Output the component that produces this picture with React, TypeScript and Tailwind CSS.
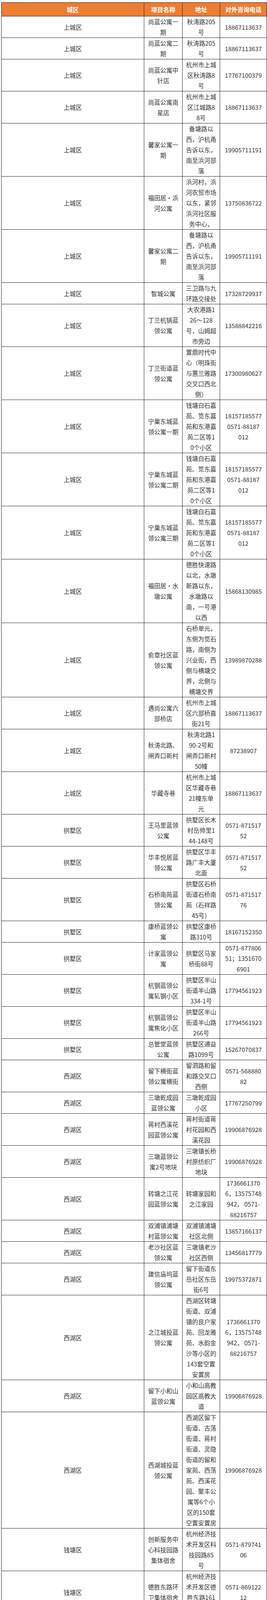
type Row = [string, string, string, string];

// 每个单元格里的换行按原图手动断开
const rows: Row[] = [
  ["上城区", "尚蓝公寓一\n期", "秋涛路205\n号", "18867113637"],
  ["上城区", "尚蓝公寓二\n期", "秋涛路205\n号", "18867113637"],
  ["上城区", "尚蓝公寓中\n针店", "杭州市上城\n区秋涛路8\n号", "17767100379"],
  ["上城区", "尚蓝公寓南\n星店", "杭州市上城\n区江城路8\n8号", "18867113637"],
  ["上城区", "馨家公寓一\n期", "备塘路以\n西，沪杭甬\n告诉以东，\n南至浜河部\n落", "19905711191"],
  ["上城区", "福田居·浜\n河公寓", "浜河村，浜\n河农贸市场\n以东，紧邻\n浜河社区服\n务中心，", "13750836722"],
  ["上城区", "馨家公寓二\n期", "备塘路以\n西，沪杭甬\n告诉以东，\n南至浜河部\n落", "19905711191"],
  ["上城区", "智城公寓", "三卫路与九\n环路交接处", "17328729937"],
  ["上城区", "丁兰杭锅蓝\n领公寓", "大农港路1\n26～128\n号，山姆超\n市旁边", "13588842216"],
  ["上城区", "丁兰街道蓝\n领公寓", "置鼎时代中\n心（明珠街\n与蕙兰雅路\n交叉口西北\n侧）", "17300980627"],
  ["上城区", "宁巢东城蓝\n领公寓一期", "钱塘白石嘉\n苑、笕东嘉\n苑和东港嘉\n苑二区等1\n0个小区", "18157185577\n0571-88187\n012"],
  ["上城区", "宁巢东城蓝\n领公寓二期", "钱塘白石嘉\n苑、笕东嘉\n苑和东港嘉\n苑二区等1\n0个小区", "18157185577\n0571-88187\n012"],
  ["上城区", "宁巢东城蓝\n领公寓三期", "钱塘白石嘉\n苑、笕东嘉\n苑和东港嘉\n苑二区等1\n0个小区", "18157185577\n0571-88187\n012"],
  ["上城区", "福田居·水\n墩公寓", "德胜快速路\n以北，水墩\n新路以东，\n水墩路以\n南，一号港\n以西", "15868130985"],
  ["上城区", "俞章社区蓝\n领公寓", "石桥单元，\n东侧为笕石\n路，南侧为\n兴业街，西\n侧与横塘交\n界，北侧与\n横塘交界", "13989870288"],
  ["上城区", "遇尚公寓六\n部桥店", "杭州市上城\n区六部桥直\n街21号", "18867113637"],
  ["上城区", "秋涛北路、\n闸弄口新村", "秋涛北路1\n90-2号和\n闸弄口新村\n50幢", "87238907"],
  ["上城区", "华藏寺巷", "杭州市上城\n区华藏寺巷\n21幢东单\n元", "18867113637"],
  ["拱墅区", "王马里蓝领\n公寓", "拱墅区长木\n村岳帅里1\n44-148号", "0571-871517\n52"],
  ["拱墅区", "华丰悦居蓝\n领公寓", "拱墅区华丰\n路广丰大厦\n北面", "0571-871517\n52"],
  ["拱墅区", "石桥南苑蓝\n领公寓", "拱墅区石桥\n街道石桥南\n苑（石祥路\n45号）", "0571-871517\n76"],
  ["拱墅区", "康桥蓝领公\n寓", "拱墅区康桥\n路310号", "18167152350"],
  ["拱墅区", "计家蓝领公\n寓", "拱墅区马家\n桥街88号", "0571-877806\n51；1351670\n6901"],
  ["拱墅区", "杭钢蓝领公\n寓轧钢小区", "拱墅区半山\n街道半山路\n334-1号", "17794561923"],
  ["拱墅区", "杭钢蓝领公\n寓焦化小区", "拱墅区半山\n街道半山路\n266号", "17794561923"],
  ["拱墅区", "总管堂蓝领\n公寓", "拱墅区通益\n路1099号", "15267070837"],
  ["西湖区", "留下横街蓝\n领公寓横街", "留泗路和留\n和路交叉口\n西侧", "0571-568880\n82"],
  ["西湖区", "三墩乾成园\n蓝领公寓", "三墩乾成园\n小区", "17767250799"],
  ["西湖区", "蒋村西溪花\n园蓝领公寓", "蒋村街道蒋\n村花园和西\n溪花园", "19906876928"],
  ["西湖区", "三墩蓝领公\n寓2号地块", "三墩镇长桥\n村原纺织厂\n地块", "19906876928"],
  ["西湖区", "转塘之江花\n园蓝领公寓", "转塘家园和\n之江家园", "1736661370\n6，13575748\n942， 0571-\n88216757"],
  ["西湖区", "双浦镇浦塘\n村蓝领公寓", "双浦镇浦塘\n社区北侧", "13857166137"],
  ["西湖区", "老沙社区蓝\n领公寓", "三墩镇老沙\n社区西侧", "13456817779"],
  ["西湖区", "建信庙坞蓝\n领公寓", "留下街道东\n岳社区东岳\n街6号", "19975372871"],
  ["西湖区", "之江城投蓝\n领公寓", "西湖区转塘\n街道、双浦\n镇的良户家\n苑、回龙雅\n苑、水韵金\n沙等小区的\n143套空置\n安置房", "1736661370\n6，13575748\n942， 0571-\n88216757"],
  ["西湖区", "留下小和山\n蓝领公寓", "小和山高教\n园区高教大\n道", "19906876928"],
  ["西湖区", "西湖城投蓝\n领公寓", "西湖区留下\n街道、古荡\n街道、蒋村\n街道、灵隐\n街道的留和\n家苑、西荡\n苑、西溪花\n园、聚丰公\n寓等6个小\n区的150套\n空置安置房", "19906876928"],
  ["钱塘区", "创新服务中\n心科技园路\n集体宿舍", "杭州经济技\n术开发区科\n技园路85\n号", "0571-879741\n06"],
  ["钱塘区", "德胜东路环\n卫集体宿舍", "杭州经济技\n术开发区德\n胜东路161\n7号", "0571-869122\n12"],
  ["钱塘区", "金乔街蓝领\n公寓", "杭州经济技\n术开发区海\n达南路与金\n乔街交叉口\n以西", "0571-882919\n47"],
  ["萧山区", "广泽小区蓝\n领公寓", "新塘街道育\n才路王有史\n村", "0571-838976\n59"],
  ["萧山区", "向阳小居", "萧绍东路1\n19号", "0571-828246\n89"],
  ["萧山区", "临东社区用\n房改建项目", "临浦镇临东\n社区劳动路\n与沪昆铁路\n交叉口以北", "0571-822562\n97"],
  ["萧山区", "湘湖管委会\n嘉园蓝领公\n寓项目", "闻堰街道大\n湾路78号", "0571-823707\n37"],
  ["萧山区", "西山蓝领公\n寓", "萧金路518\n号", "13588266192"],
  ["余杭区", "俊成酒店项\n目", "金恒德汽配\n城A区23幢", "13396589377"],
  ["余杭区", "五常米果部\n落项目", "米果（五常\n部落店）", "19157859816"],
  ["临平区", "运溪路项目", "运溪路101\n号", "0571-861665\n57"],
  ["临平区", "月荷嘉园项\n目", "北沙路月荷\n嘉苑", "0571-863222\n22"],
  ["富阳区", "CCB建融家\n园·蓝领公\n寓", "东洲街道七\n号路22号", "85314730"],
];

const Lines = ({ text }: { text: string }) => (
  <>
    {text.split("\n").map((line, i) => (
      <div key={i} className="h-[27px] whitespace-pre leading-[27px]">
        {line}
      </div>
    ))}
  </>
);

export default function App() {
  return (
    <div className="bg-white pl-[3px] pt-[6px] pb-[30px] font-['Noto_Sans_CJK_SC','Noto_Sans',sans-serif] text-[15.5px] text-[#333]">
      <table className="w-[679px] table-fixed border-collapse">
        <colgroup>
          <col className="w-[365px]" />
          <col className="w-[98px]" />
          <col className="w-[96px]" />
          <col className="w-[120px]" />
        </colgroup>
        <thead>
          <tr className="bg-[#ed7d31]">
            {["城区", "项目名称", "地址", "对外咨询电话"].map((h) => (
              <th
                key={h}
                className="border border-[#222] p-0 text-center align-middle font-bold whitespace-nowrap text-white"
              >
                <div className="h-[34px] leading-[34px]">{h}</div>
              </th>
            ))}
          </tr>
        </thead>
        <tbody>
          {rows.map((row, i) => (
            <tr key={i}>
              {row.map((cell, j) => (
                <td
                  key={j}
                  className="border border-[#222] p-0 text-center align-middle"
                >
                  <Lines text={cell} />
                </td>
              ))}
            </tr>
          ))}
        </tbody>
      </table>
    </div>
  );
}
